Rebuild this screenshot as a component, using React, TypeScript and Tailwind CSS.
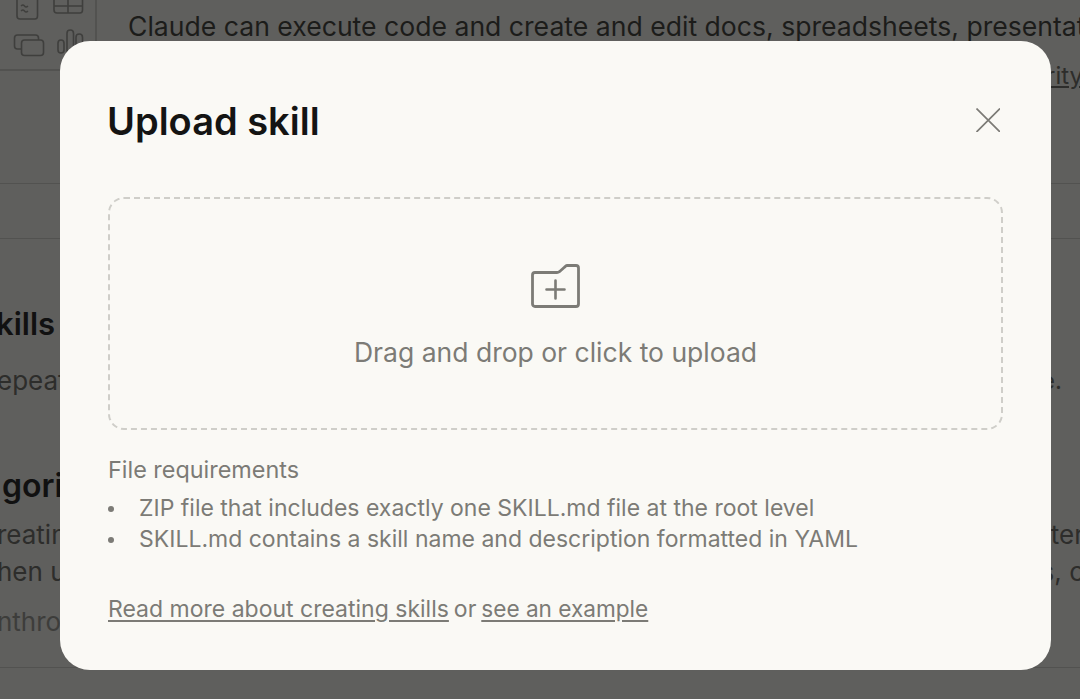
import React from 'react';

const font = { fontFamily: 'Inter, "Liberation Sans", sans-serif' };

const FolderPlus = () => (
  <svg width="50" height="45" viewBox="0 0 50 45" fill="none" stroke="#7c7b76" strokeWidth="2.800" strokeLinejoin="round" strokeLinecap="round">
    <path d="M4 8.500h22c1 0 1.600-.2 2.400-.8l5-4.400c.7-.6 1.400-1.800 2.400-1.800h9.200c1.400 0 2.500 1.100 2.500 2.500v36c0 1.400-1.100 2.500-2.500 2.500H4c-1.400 0-2.500-1.100-2.500-2.500V11c0-1.400 1.100-2.500 2.500-2.500z" />
    <path d="M24.500 16.500v18M15.500 25.500h18" strokeWidth="2.600" />
  </svg>
);

const CloseIcon = () => (
  <svg width="24" height="24" viewBox="0 0 24 24" fill="none" stroke="#7c7b76" strokeWidth="1.700">
    <path d="M0.500 0.500L24 24M24 0.500L0.500 24" />
  </svg>
);

const SidebarIcons = () => (
  <svg width="96" height="69" viewBox="0 0 96 69" fill="none" stroke="#3f3f3d" strokeWidth="1.600" strokeLinejoin="round">
    <path d="M17 0v16c0 2 1 3 3 3h15c1.500 0 2.500-1 2.500-3V0" />
    <path d="M21 6q2-2 3.500 0t3.500 0M21 11q2-2 3.500 0t3.500 0" strokeWidth="1.300" />
    <path d="M54 0v10c0 2 1 3 3 3h23c1.500 0 2.500-1 2.500-3V0M54 6h28M68 0v13" />
    <rect x="14.500" y="35" width="24" height="14" rx="3" />
    <rect x="21.500" y="40" width="22" height="15.500" rx="3" fill="#5f5f5d" />
    <rect x="58" y="40" width="6" height="13" rx="3" />
    <rect x="67" y="30" width="6.500" height="23" rx="3.200" />
    <rect x="76" y="34" width="6.500" height="19" rx="3.200" />
  </svg>
);

const Backdrop = () => (
  <div className="flex flex-col text-[#1c1c1a]">
    <div className="flex h-[71px]">
      <div className="w-[97px] h-[71px] border-r-[2px] border-b-[2px] border-[#525250] shrink-0">
        <SidebarIcons />
      </div>
      <div className="pl-[31px] pt-[8px] text-[26.6px] leading-[36px] whitespace-nowrap">
        Claude can execute code and create and edit docs, spreadsheets, presentations
      </div>
    </div>
    <div className="-mt-[8px] h-[121px] border-b border-[#525250] flex justify-end">
      <span className="text-[24px] leading-[26px] underline text-[#2d2d2b] whitespace-nowrap mr-[-3px]">security</span>
    </div>
    <div className="h-[55px] border-b border-[#525250]" />
    <div className="h-[429px] border-b border-[#525250] relative overflow-hidden">
      <div className="pt-[67px] whitespace-nowrap">
        <span className="text-[31px] leading-[36px] font-semibold text-[#111] ml-[-21px]">skills</span>
      </div>
      <div className="flex justify-between text-[26px] leading-[32px] text-[#2d2d2b] mt-[23px] whitespace-nowrap">
        <span className="ml-[-3px]">epeat</span>
        <span className="mr-[18px] text-[24px]">e.</span>
      </div>
      <div className="text-[32px] leading-[40px] font-semibold text-[#111] mt-[69px] ml-[2px] whitespace-nowrap">gorit</div>
      <div className="flex justify-between text-[26px] leading-[36px] text-[#2d2d2b] mt-[11px] whitespace-nowrap">
        <span className="ml-[-3px]">reatin</span>
        <span className="mr-[-4px]">ter</span>
      </div>
      <div className="flex justify-between text-[26px] leading-[37px] text-[#2d2d2b] whitespace-nowrap">
        <span className="ml-[-3px]">hen u</span>
        <span className="mr-[-4px]">s, c</span>
      </div>
      <div className="text-[26px] leading-[36px] text-[#3d3d3b] mt-[14px] ml-[-3px] whitespace-nowrap">nthrop</div>
    </div>
  </div>
);

const Modal = () => (
  <div className="absolute left-[60px] top-[41px] w-[991px] h-[629px] rounded-[30px] bg-[#faf9f5] px-[48px] pt-[56px]">
    <div className="flex items-start justify-between">
      <h2 className="text-[38px] leading-[48px] font-semibold text-[#141413] -ml-[1px]">Upload skill</h2>
      <button className="mt-[11px] mr-[3px]"><CloseIcon /></button>
    </div>
    <div className="mt-[52px] h-[233px] rounded-[16px] border-[2px] border-dashed border-[#cfcec9] flex flex-col items-center pt-[65px]">
      <FolderPlus />
      <p className="mt-[23px] text-[26.5px] leading-[40px] text-[#7c7b76]">Drag and drop or click to upload</p>
    </div>
    <p className="mt-[24px] text-[23.4px] leading-[32px] text-[#7c7b76]">File requirements</p>
    <ul className="mt-[7px] text-[23px] leading-[31px] text-[#7c7b76]">
      <li className="flex items-center"><span className="w-[6px] h-[6px] rounded-full bg-[#7c7b76] mr-[25px] shrink-0" />ZIP file that includes exactly one SKILL.md file at the root level</li>
      <li className="flex items-center"><span className="w-[6px] h-[6px] rounded-full bg-[#7c7b76] mr-[25px] shrink-0" />SKILL.md contains a skill name and description formatted in YAML</li>
    </ul>
    <p className="mt-[38px] text-[23px] leading-[32px] text-[#7c7b76]">
      <a className="underline underline-offset-[3px]">Read more about creating skills</a>
      <span className="mx-[-1.5px]"> or </span>
      <a className="underline underline-offset-[3px] text-[22.6px]">see an example</a>
    </p>
  </div>
);

export default function App() {
  return (
    <div className="relative w-[1080px] h-[699px] overflow-hidden bg-[#5f5f5d]" style={font}>
      <Backdrop />
      <Modal />
    </div>
  );
}
